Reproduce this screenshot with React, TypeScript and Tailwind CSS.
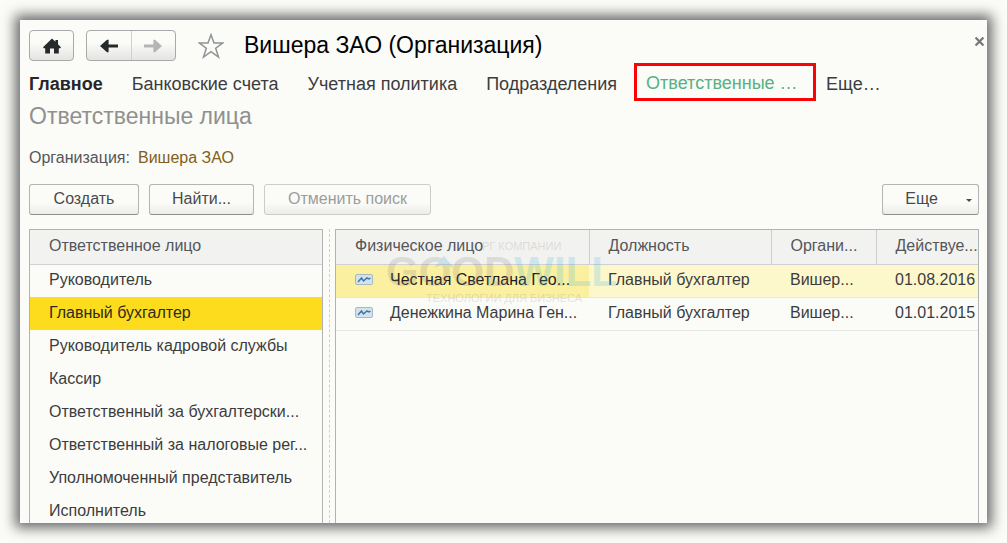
import type { ReactNode } from 'react'
import clsx from 'clsx'

const sections = ['Банковские счета', 'Учетная политика', 'Подразделения']

const roles = [
  'Руководитель',
  'Главный бухгалтер',
  'Руководитель кадровой службы',
  'Кассир',
  'Ответственный за бухгалтерски...',
  'Ответственный за налоговые рег...',
  'Уполномоченный представитель',
  'Исполнитель',
]

const people = [
  { name: 'Честная Светлана Гео...', post: 'Главный бухгалтер', org: 'Вишер...', since: '01.08.2016' },
  { name: 'Денежкина Марина Ген...', post: 'Главный бухгалтер', org: 'Вишер...', since: '01.01.2015' },
]

const columns = ['Физическое лицо', 'Должность', 'Органи...', 'Действуе...']

const SELECTED_ROLE = 1
const SELECTED_PERSON = 0

function HomeIcon() {
  return (
    <svg className="h-4 w-[18px]" viewBox="0 0 18 16" fill="#262a2c">
      <path d="M9 0.5 L12.4 3.7 V2 H15 V6.2 L18 9.2 L17.2 10.2 H15.8 V15.5 H11 V10.6 H7 V15.5 H2.2 V10.2 H0.8 L0 9.2 Z" />
    </svg>
  )
}

function ArrowIcon({ forward = false }: { forward?: boolean }) {
  return (
    <svg className={clsx('h-[14px] w-[18px]', forward && '-scale-x-100')} viewBox="0 0 18 14" fill={forward ? '#b4b6b6' : '#262a2c'}>
      <path d="M0 7 L7 0.8 H8.6 V5.5 H18 V8.5 H8.6 V13.2 H7 Z" />
    </svg>
  )
}

function StarIcon() {
  return (
    <svg className="h-[26px] w-[26px]" viewBox="0 0 26 26" fill="none" stroke="#8f9296" strokeWidth="1.5">
      <path d="M13 1.8 L16 10 H24.6 L17.7 15.2 L20.5 24 L13 18.7 L5.5 24 L8.3 15.2 L1.4 10 H10 Z" />
    </svg>
  )
}

// Little "record" glyph shown in front of every row
function RecordIcon() {
  return (
    <svg className="h-[11px] w-[18px] shrink-0" viewBox="0 0 18 11" fill="none">
      <rect x="0.5" y="0.5" width="17" height="10" rx="1.5" fill="#d3e2ec" stroke="#a9b9c3" />
      <path d="M3 8 L6.5 4 L8.5 7 L12 4 L14 5 L15.5 4" stroke="#4278a5" strokeWidth="1.5" />
    </svg>
  )
}

function Button({ children, className, disabled }: { children: ReactNode; className?: string; disabled?: boolean }) {
  return (
    <button
      type="button"
      disabled={disabled}
      className={clsx(
        'flex h-[31px] items-center justify-center rounded-[3px] border bg-linear-to-b from-[#fbfcf8] from-60% to-[#ececea] pb-[2px] text-base',
        disabled ? 'border-[#cbcccb] text-[#9b9c9b]' : 'border-[#b4b4b4] border-b-[#8f8f8f] text-[#4a4a4c]',
        className,
      )}
    >
      {children}
    </button>
  )
}

function Watermark() {
  return (
    <div className="pointer-events-none absolute top-2 left-[50px] flex flex-col text-[#8a8088] opacity-20 select-none" aria-hidden>
      <span className="pl-24 text-[11px] leading-4">РГ КОМПАНИИ</span>
      <span className="text-[42px] leading-9 font-bold">
        GOOD<span className="text-[#3fb2d8]">WILL</span>
      </span>
      <svg className="absolute top-[18px] left-12 h-3 w-5" viewBox="0 0 20 12" fill="#1fa0d0">
        <path d="M10 0 L20 12 L10 8 L0 12 Z" />
      </svg>
      <span className="pl-10 text-[11px] leading-4">ТЕХНОЛОГИИ ДЛЯ БИЗНЕСА</span>
    </div>
  )
}

export default function App() {
  return (
    <div className="flex h-screen bg-[#fbfcf8] p-5 font-['Liberation_Sans',Arial,sans-serif] text-base text-[#3c3c40]">
      <main className="flex min-w-0 flex-1 flex-col overflow-hidden bg-[#fbfcf8] px-2 pt-2 shadow-[0_0_12px_5px_#6a6a6e]">
        {/* Title bar */}
        <header className="-mr-[6px] flex items-center pt-[2px] pl-px">
          <button type="button" aria-label="Домой" className="flex h-[31px] w-[45px] items-center justify-center rounded-[4px] border border-[#a9a9aa] bg-linear-to-b from-[#fbfcf8] from-40% to-[#e4e4e3]">
            <HomeIcon />
          </button>
          <div className="ml-3 flex h-[31px] w-[90px] divide-x divide-[#d0d0d0] rounded-[4px] border border-[#a9a9aa] bg-linear-to-b from-[#fbfcf8] from-40% to-[#e4e4e3]">
            <button type="button" aria-label="Назад" className="flex flex-1 items-center justify-center">
              <ArrowIcon />
            </button>
            <button type="button" aria-label="Вперед" disabled className="flex flex-1 items-center justify-center">
              <ArrowIcon forward />
            </button>
          </div>
          <button type="button" aria-label="В избранное" className="ml-[22px]">
            <StarIcon />
          </button>
          <h1 className="ml-5 flex-1 pb-px text-[23px] leading-7 text-black">Вишера ЗАО (Организация)</h1>
          <button type="button" aria-label="Закрыть" className="mb-2 p-px">
            <svg className="h-[9px] w-[9px]" viewBox="0 0 8 8" stroke="#77777a" strokeWidth="2">
              <path d="M0.5 0.5 L7.5 7.5 M7.5 0.5 L0.5 7.5" />
            </svg>
          </button>
        </header>

        {/* Sections */}
        <nav className="mt-[2px] flex items-end gap-[29px] pl-px text-[18px] leading-[34px]">
          <a href="#main" className="font-bold text-[#262628]">Главное</a>
          {sections.map((s) => (
            <a key={s} href="#section">{s}</a>
          ))}
          <div className="-ml-3 flex items-end gap-[10px]">
            <a href="#people" className="h-[38px] w-[182px] border-3 border-[#fb0207] px-[9px] text-[#57b184]">Ответственные …</a>
            <a href="#more">Еще…</a>
          </div>
        </nav>

        <h2 className="mt-px pl-px text-[23px] leading-7 text-[#8f908f]">Ответственные лица</h2>

        <p className="mt-[18px] flex gap-2 pl-px leading-5">
          <span className="text-[#55565a]">Организация:</span>
          <a href="#org" className="text-[#80601c]">Вишера ЗАО</a>
        </p>

        {/* Commands */}
        <div className="mt-4 flex gap-[10px] pl-px">
          <Button className="w-[110px]">Создать</Button>
          <Button className="w-[105px]">Найти...</Button>
          <Button className="w-[167px]" disabled>Отменить поиск</Button>
          <Button className="ml-auto w-[97px] gap-7 pl-4">
            Еще
            <svg className="mt-1 h-[3px] w-[6px]" viewBox="0 0 6 3" fill="#4a4a4c">
              <path d="M0 0 H6 L3 3 Z" />
            </svg>
          </Button>
        </div>

        <div className="mt-[14px] flex min-h-0 flex-1 pl-px">
          {/* Roles */}
          <div className="w-[294px] shrink-0 overflow-hidden border border-b-0 border-[#b1b2b4]">
            <table className="w-full table-fixed text-left">
              <thead>
                <tr className="h-[34px] border-b border-[#d0d1d0] bg-[#f2f3f0] text-[#55565a]">
                  <th className="pb-[2px] pl-[19px] font-normal">Ответственное лицо</th>
                </tr>
              </thead>
              <tbody>
                {roles.map((role, i) => (
                  <tr key={role} className={clsx('h-[33px]', i === SELECTED_ROLE && 'bg-[#fcdc1c] text-[#2c2a20]')}>
                    <td className="pb-[2px] pl-[19px] whitespace-nowrap">{role}</td>
                  </tr>
                ))}
              </tbody>
            </table>
          </div>

          {/* Splitter */}
          <div className="flex w-3 shrink-0 justify-center">
            <div className="border-l border-dashed border-[#cfcfcf]" />
          </div>

          {/* People */}
          <div className="relative min-w-0 flex-1 overflow-hidden border border-b-0 border-[#b1b2b4]">
            <table className="w-full table-fixed text-left whitespace-nowrap">
              <colgroup>
                <col className="w-[253px]" />
                <col className="w-[182px]" />
                <col className="w-[105px]" />
                <col />
              </colgroup>
              <thead>
                <tr className="h-[34px] border-b border-[#d0d1d0] bg-[#f2f3f0] text-[#55565a]">
                  {columns.map((c) => (
                    <th key={c} className="border-r border-[#cdcecd] pb-[2px] pl-[19px] font-normal last:border-r-0">{c}</th>
                  ))}
                </tr>
              </thead>
              <tbody>
                {people.map((p, i) => (
                  <tr key={p.name} className={clsx('h-[33px] border-b border-[#e6e7e4]', i === SELECTED_PERSON && 'bg-[#fcf8cc]')}>
                    <td className={clsx('pb-[2px] pl-[19px]', i === SELECTED_PERSON && 'bg-[#fbf0a0] text-[#1c1c1c]')}>
                      <span className="flex items-center gap-[17px]">
                        <RecordIcon />
                        {p.name}
                      </span>
                    </td>
                    <td className="pb-[2px] pl-[19px]">{p.post}</td>
                    <td className="pb-[2px] pl-[19px]">{p.org}</td>
                    <td className="pb-[2px] pl-[19px]">{p.since}</td>
                  </tr>
                ))}
              </tbody>
            </table>
            <Watermark />
          </div>
        </div>
      </main>
    </div>
  )
}
